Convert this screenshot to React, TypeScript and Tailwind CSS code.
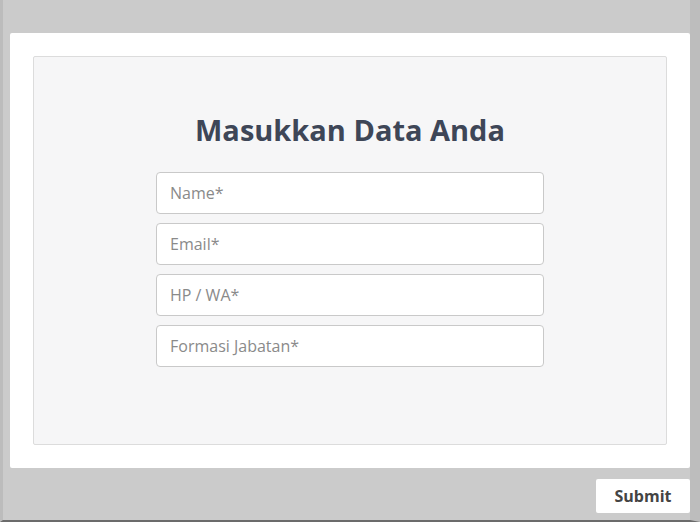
import React from "react";

export default function App() {
  const fields = ["Name*", "Email*", "HP / WA*", "Formasi Jabatan*"];
  return (
    <div
      className="w-[700px] h-[522px] bg-[#cbcbcb] border-l-[3px] border-l-[#bcbcbc] border-r-[10px] border-r-[#bdbdbd] border-b-[2px] border-b-[#6b6b6b] flex flex-col overflow-hidden"
      style={{ fontFamily: '"Open Sans", "Liberation Sans", sans-serif' }}
    >
      <div className="ml-[7px] mt-[33px] w-[680px] h-[435px] bg-white rounded-[2px] p-[23px]">
        <div className="h-full bg-[#f6f6f7] border border-[#dcdcdc] rounded-[2px] flex flex-col items-center pt-[55px]">
          <h1 className="text-[29px] leading-[35px] font-bold text-[#3e4657] m-0">
            Masukkan Data Anda
          </h1>
          <div className="mt-[25px] flex flex-col gap-[9px]">
            {fields.map((f) => (
              <input
                key={f}
                placeholder={f}
                className="w-[388px] h-[42px] bg-white border border-[#c9c9c9] rounded-[4px] px-[13px] text-[16px] text-[#555] placeholder:text-[#8a8a8a] outline-none"
                style={{ fontFamily: '"Open Sans", "Liberation Sans", sans-serif' }}
              />
            ))}
          </div>
        </div>
      </div>
      <div className="flex justify-end mt-[11px] pr-0">
        <button className="w-[94px] h-[34px] bg-white text-[#444] font-bold text-[16px] rounded-[2px]">
          Submit
        </button>
      </div>
    </div>
  );
}
